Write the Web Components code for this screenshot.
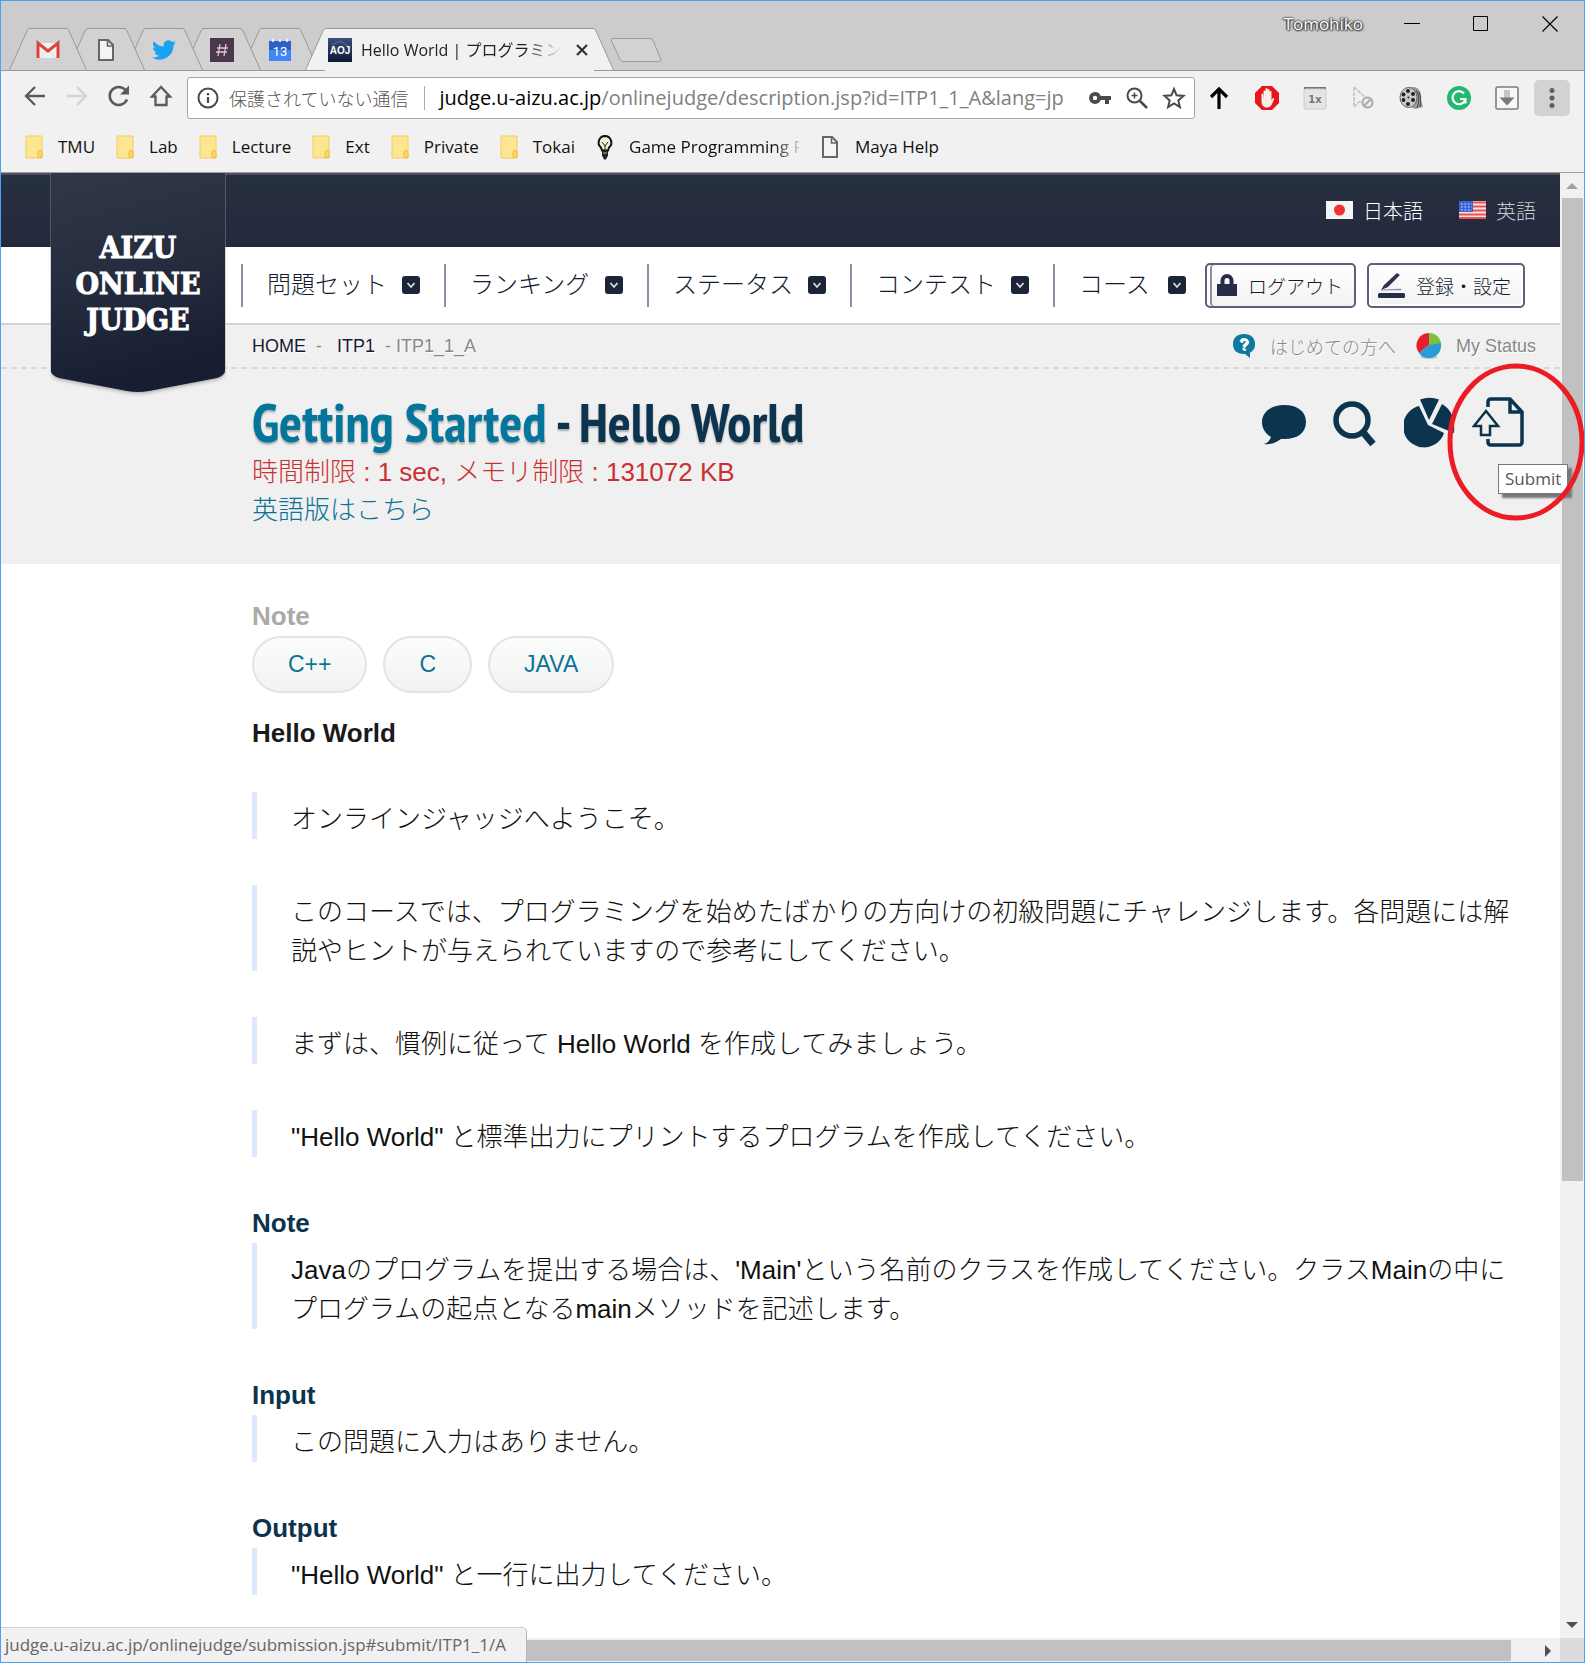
<!DOCTYPE html>
<html lang="ja">
<head>
<meta charset="utf-8">
<title>Hello World | プログラミング</title>
<style>
  html, body { margin: 0; height: 100%; }
  body { font-family: "Liberation Sans", "Noto Sans CJK JP", sans-serif; color: #111; background: #fff; }
</style>
</head>
<body>
<browser-window>
  <tab-strip slot="tabs">
    <browser-tab style="z-index:5"><app-icon name="gmail"></app-icon></browser-tab>
    <browser-tab style="z-index:4"><app-icon name="doc"></app-icon></browser-tab>
    <browser-tab style="z-index:3"><app-icon name="twitter"></app-icon></browser-tab>
    <browser-tab style="z-index:2"><app-icon name="slack"></app-icon></browser-tab>
    <browser-tab style="z-index:1"><app-icon name="calendar"></app-icon></browser-tab>
    <browser-tab active style="z-index:6"><app-icon name="aoj"></app-icon><span slot="title">Hello World | プログラミング</span></browser-tab>
  </tab-strip>
  <tool-bar slot="toolbar"></tool-bar>
  <bookmark-bar slot="bookmarks">
    <bookmark-item icon="folder">TMU</bookmark-item>
    <bookmark-item icon="folder">Lab</bookmark-item>
    <bookmark-item icon="folder">Lecture</bookmark-item>
    <bookmark-item icon="folder">Ext</bookmark-item>
    <bookmark-item icon="folder">Private</bookmark-item>
    <bookmark-item icon="folder">Tokai</bookmark-item>
    <bookmark-item icon="bulb" fade>Game Programming P</bookmark-item>
    <bookmark-item icon="doc">Maya Help</bookmark-item>
  </bookmark-bar>
  <site-header>
    <nav-item>問題セット</nav-item>
    <nav-item>ランキング</nav-item>
    <nav-item>ステータス</nav-item>
    <nav-item>コンテスト</nav-item>
    <nav-item last>コース</nav-item>
  </site-header>
  <problem-head></problem-head>
  <problem-body>
    <section-title muted>Note</section-title>
    <pill-row><pill-link>C++</pill-link><pill-link>C</pill-link><pill-link>JAVA</pill-link></pill-row>
    <section-title lead>Hello World</section-title>
    <quote-block>オンラインジャッジへようこそ。</quote-block>
    <quote-block>このコースでは、プログラミングを始めたばかりの方向けの初級問題にチャレンジします。各問題には解説やヒントが与えられていますので参考にしてください。</quote-block>
    <quote-block>まずは、慣例に従って Hello World を作成してみましょう。</quote-block>
    <quote-block>"Hello World" と標準出力にプリントするプログラムを作成してください。</quote-block>
    <section-title>Note</section-title>
    <quote-block>Javaのプログラムを提出する場合は、'Main'という名前のクラスを作成してください。クラスMainの中にプログラムの起点となるmainメソッドを記述します。</quote-block>
    <section-title>Input</section-title>
    <quote-block>この問題に入力はありません。</quote-block>
    <section-title>Output</section-title>
    <quote-block>"Hello World" と一行に出力してください。</quote-block>
  </problem-body>
</browser-window>

<script>
const define = (name, html, setup) => customElements.define(name, class extends HTMLElement {
  constructor() {
    super();
    this.attachShadow({ mode: 'open' }).innerHTML =
      '<style>*{box-sizing:border-box}a{color:inherit;text-decoration:none}button{font:inherit;border:0;background:none;padding:0;margin:0;color:inherit}</style>' + html;
  }
  connectedCallback() { if (setup) setup(this, this.shadowRoot); }
});

const UI = '"Open Sans","Noto Sans CJK JP",sans-serif';

const ICONS = {
  gmail: [24, 24, '<path d="M2 5h20v15H2z" fill="#f0f0f0"/><path d="M2 20V5l10 8 10-8v15" fill="none" stroke="#d9453a" stroke-width="3"/><path d="M5 20l5-7M19 20l-5-7" stroke="#ddd"/>'],
  doc: [20, 24, '<path d="M3 2h9l5 5v15H3z" fill="#f4f4f4" stroke="#666" stroke-width="2"/><path d="M11.500 2v6H17" fill="none" stroke="#666" stroke-width="1.600"/>'],
  twitter: [24, 24, '<path fill="#1da1f2" d="M24 4.600a10 10 0 0 1-2.800.8 5 5 0 0 0 2.100-2.700 10 10 0 0 1-3.100 1.200 4.900 4.900 0 0 0-8.400 4.500A14 14 0 0 1 1.700 3.200a4.900 4.900 0 0 0 1.500 6.600 5 5 0 0 1-2.200-.6 4.900 4.900 0 0 0 3.900 4.900 5 5 0 0 1-2.200.1 4.900 4.900 0 0 0 4.600 3.400A9.900 9.900 0 0 1 0 19.500a14 14 0 0 0 21.500-12.400A10 10 0 0 0 24 4.600z"/>'],
  slack: [24, 24, '<path fill="#4c364c" d="M0 0h24v24H0z"/><path d="M10 6L8 18M16 6l-2 12M7 10h11M6 14h11" stroke="#d8c8d8" stroke-width="1.300"/>'],
  calendar: [24, 24, '<path fill="#ccc" d="M1 1h22v4H1z"/><path fill="#2f5fc9" d="M1 3h22v10H1z"/><path fill="#4285f4" d="M1 12h22v11H1z"/><path d="M5 1v3M12 1v3M19 1v3" stroke="#fff" stroke-width="1.500"/><text x="12" y="18" font-size="13" text-anchor="middle" fill="#fff" font-family="Roboto,sans-serif">13</text>'],
  aoj: [24, 24, '<defs><linearGradient id="g" x2="0" y2="1"><stop stop-color="#3a4f80"/><stop offset="1" stop-color="#0e1730"/></linearGradient></defs><path fill="url(#g)" d="M0 0h24v24H0z"/><path d="M4 7l8-4 8 5" stroke="#60739c" fill="none"/><text x="12" y="16" font-size="10" font-weight="bold" text-anchor="middle" fill="#fff" font-family="Liberation Sans,sans-serif">AOJ</text>'],
  folder: [18, 24, '<path d="M1 1h16v22H1z" fill="#fde591" stroke="#f2cd5c"/><path d="M13 22.500v-5a2 2 0 0 1 4 0v5z" fill="#fdd860" stroke="#e8bd48"/>'],
  bulb: [18, 26, '<path d="M9 2a6.500 6.500 0 0 0-4 11.500l1 3h6l1-3A6.500 6.500 0 0 0 9 2z" fill="#f1edd8" stroke="#111" stroke-width="2"/><path d="M6 8l3 4 3-4M9 12v4" fill="none" stroke="#222"/><path d="M6 16.500h6v5l-2 4H8l-2-4z" fill="#222"/><path d="M7 19h4" stroke="#aaa"/>'],
  back: [24, 24, '<path d="M22 12H3M12 3l-9 9 9 9" fill="none" stroke="#5a5a5a" stroke-width="2.300"/>'],
  forward: [24, 24, '<path d="M2 12h19M12 3l9 9-9 9" fill="none" stroke="#d3d3d3" stroke-width="2.300"/>'],
  reload: [24, 24, '<path d="M20 15.500A9 9 0 1 1 18.500 6" fill="none" stroke="#5a5a5a" stroke-width="2.600"/><path d="M22 1.500v9h-9z" fill="#5a5a5a"/>'],
  home: [24, 24, '<path d="M12 3L3 12.500h3.500V21h11v-8.500H21z" fill="none" stroke="#5a5a5a" stroke-width="2.300"/>'],
  info: [24, 24, '<circle cx="12" cy="12" r="9.500" fill="none" stroke="#4a4a4a" stroke-width="2"/><path d="M12 11v6M12 7v2.200" stroke="#4a4a4a" stroke-width="2.200"/>'],
  key: [24, 24, '<path d="M7 6a6 6 0 1 0 5.700 8H17v4h4v-4h2v-4H12.700A6 6 0 0 0 7 6zm0 8.200a2.200 2.200 0 1 1 0-4.400 2.200 2.200 0 0 1 0 4.400z" fill="#4a4a4a"/>'],
  zoom: [24, 24, '<circle cx="9.500" cy="9.500" r="7" fill="none" stroke="#4a4a4a" stroke-width="2"/><path d="M15 15l7 7" stroke="#4a4a4a" stroke-width="2.600"/><path d="M6.500 9.500h6M9.500 6.500v6" stroke="#4a4a4a" stroke-width="1.500"/>'],
  star: [24, 24, '<path d="M12 3l2.600 6.300 6.900.6-5.200 4.500 1.600 6.700-5.900-3.600-5.900 3.600 1.600-6.700-5.200-4.500 6.900-.6z" fill="none" stroke="#4a4a4a" stroke-width="2"/>'],
  up: [24, 24, '<path d="M12 23V3M4 11l8-8 8 8" fill="none" stroke="#000" stroke-width="3.200"/>'],
  hand: [24, 24, '<path d="M7 0h10l7 7v10l-7 7H7l-7-7V7z" fill="#e8161b"/><path d="M6.500 8v8c0 3 2 5.500 5.500 5.500 3 0 4.500-2 5.200-4l2-4.500c.3-1-.9-1.500-1.500-.6L16.500 14V6a1 1 0 0 0-2 0v5-7a1 1 0 0 0-2 0v7-8a1 1 0 0 0-2 0v8-5.500a1 1 0 0 0-2 0V13L8 8a.8.8 0 0 0-1.500 0z" fill="#f6f0ea"/>'],
  onex: [24, 24, '<path d="M1 1h22v3H1z" fill="#777"/><rect x="1" y="3" width="22" height="20" rx="1.500" fill="#e4e4e4" stroke="#ccc"/><text x="12" y="17" font-size="10" font-weight="bold" text-anchor="middle" fill="#777" font-family="DejaVu Sans,sans-serif">1x</text>'],
  cursor: [24, 24, '<path d="M3 1v20l5-5h5M3 1l13 12" fill="none" stroke="#c4c4c4" stroke-width="1.600" stroke-dasharray="4 1"/><circle cx="16.500" cy="16.500" r="5" fill="#eee" stroke="#aaa" stroke-width="2"/><path d="M13.500 19.500l6-6" stroke="#aaa" stroke-width="2"/>'],
  reel: [24, 24, '<path d="M9 1h6c6 1 8 7 7 13l2 7-8 2-9-4z" fill="#999"/><path d="M17 4c4 5 3 13 1 18M20 6c2 5 2 10 1 15" stroke="#444" fill="none"/><ellipse cx="9.500" cy="11.500" rx="8.500" ry="10" fill="#c9c9c9" stroke="#666"/><g fill="#222"><circle cx="9" cy="5" r="2"/><circle cx="14" cy="8" r="2"/><circle cx="14" cy="14" r="2"/><circle cx="9" cy="18" r="2"/><circle cx="4.500" cy="14" r="1.900"/><circle cx="4.500" cy="8.500" r="1.900"/><circle cx="9.400" cy="11.500" r="1"/></g>'],
  grammarly: [24, 24, '<circle cx="12" cy="12" r="12" fill="#25b66f"/><path d="M17 7.500a6.500 6.500 0 1 0 1.300 6" fill="none" stroke="#fff" stroke-width="2.200"/><path d="M13 13h5.500v4.500" fill="none" stroke="#fff" stroke-width="2.200"/>'],
  download: [24, 24, '<rect x="1" y="1" width="22" height="22" rx="1.500" fill="#f7f7f7" stroke="#7d7d7d" stroke-width="1.600"/><path d="M9 4h6v8H9z" fill="#c4c4c4"/><path d="M4.500 11.500h15L12 19.500z" fill="#7a7a7a"/>'],
  dots: [24, 24, '<g fill="#5f5f5f"><circle cx="12" cy="4.500" r="2.500"/><circle cx="12" cy="12" r="2.500"/><circle cx="12" cy="19.500" r="2.500"/></g>'],
  jp: [27, 18, '<path d="M0 0h27v18H0z" fill="#f4f4f4"/><circle cx="13.500" cy="9" r="5.500" fill="#f23030"/>'],
  us: [27, 18, '<path d="M0 0h27v18H0z" fill="#f5e4e4"/><path d="M0 1.500h27M0 5.500h27M0 9.500h27M0 13.500h27M0 17h27" stroke="#e8534f" stroke-width="2"/><path d="M0 0h14v11H0z" fill="#3c62d8"/><path d="M2 3h11M2 6h11M2 9h11" stroke="#e5ecff" stroke-width="1.200" stroke-dasharray="1.500 2"/>'],
  caret: [18, 18, '<rect width="18" height="18" rx="3" fill="#1c2438"/><path d="M5.500 7l3.500 4 3.500-4" fill="none" stroke="#ddd" stroke-width="1.800"/>'],
  lock: [20, 22, '<path d="M0 10h20v12H0z" fill="#242c48"/><path d="M5.500 11V6.500a4.500 4.500 0 0 1 9 0V11" fill="none" stroke="#242c48" stroke-width="4"/>'],
  pen: [27, 26, '<rect y="21" width="27" height="5" rx="1.500" fill="#242c48"/><path d="M3 18l3-5L19 1l3 2L10 15z" fill="#2c3450"/><path d="M3 18l20-1v1z" fill="#7c8294" stroke="#7c8294" stroke-width=".5"/>'],
  help: [24, 24, '<path d="M12 0c7 0 11 4 11 10 0 5-2 7-5 8.500V24l-5-4C5 20.500 1 16 1 10S5 0 12 0z" fill="#0c7a9e"/><text x="12" y="16" font-size="16" font-weight="bold" text-anchor="middle" fill="#fff" font-family="Liberation Sans,sans-serif">?</text>'],
  status: [26, 26, '<ellipse cx="13" cy="24" rx="9" ry="2" fill="#ccc"/><path d="M13 12V0A12.500 12.500 0 0 0 3 20z" fill="#e5202c"/><path d="M13 12V0c8 0 12 6 12 12l-1 3z" fill="#7cc242"/><path d="M13 12l12-2c1 8-4 15-12 15-5 0-8-2-10-5z" fill="#2a9bd6"/>'],
  bubble: [46, 50, '<path transform="translate(-1 7)" d="M23 1C10 1 1 8 1 18c0 7 4 12 9 15-1 3-3 6-7 7 7 1 13-2 17-5 16 1 25-6 25-17S36 1 23 1z" fill="#0c344f"/>'],
  search: [46, 50, '<g transform="translate(0 4)"><circle cx="19" cy="19" r="16" fill="none" stroke="#0c344f" stroke-width="5.500"/><path d="M29 30l11 13" stroke="#0c344f" stroke-width="7"/></g>'],
  pie: [52, 52, '<path d="M24 29L15 10a21 21 0 1 0 25 27z" fill="#0c344f"/><path d="M25 24L16 3.500q9.500-3.500 19 0z" fill="#0c344f"/><path d="M28 28l10-20q14 8 12 29z" fill="#0c344f"/>'],
  submit: [52, 50, '<path d="M16 10V5q0-3 3-3h19l12 13v30q0 3-3 3H19q-3 0-3-3v-3M38 2v13h12" fill="none" stroke="#0c344f" stroke-width="3.500"/><path d="M14 14L2 29h7v9h9v-9h8z" fill="#f0f0f0" stroke="#0c344f" stroke-width="2.500"/>'],
  min: [16, 16, '<path d="M0 7.500h16" stroke="#000"/>'],
  max: [16, 16, '<path d="M.5.5h14v14H.5z" fill="none" stroke="#000"/>'],
  close: [16, 16, '<path d="M.5.5l15 15M15.500.5l-15 15" stroke="#000" stroke-width="1.200"/>'],
  tabclose: [12, 12, '<path d="M1 1l10 10M11 1L1 11" stroke="#333" stroke-width="2.200"/>']
};

define('app-icon', '<style>:host{display:inline-flex;flex:none}svg{display:block}</style><span id="s"></span>', (el, root) => {
  const icon = ICONS[el.getAttribute('name')];
  if (!icon) return;
  const [w, h, body] = icon;
  root.getElementById('s').innerHTML = `<svg width="${w}" height="${h}" viewBox="0 0 ${w} ${h}" aria-hidden="true">${body}</svg>`;
});

define('browser-tab', `<style>
  :host{display:flex;position:relative;height:42px;margin-left:-20px;--fill:#d2d2d2}
  :host(:first-child){margin-left:0}
  :host([active]){--fill:#f1f1f1;margin-left:-14px;height:43px}
  svg{flex:none;display:block;fill:var(--fill);stroke:#999}
  .mid{display:flex;align-items:center;justify-content:center;gap:9px;width:38px;background:var(--fill);border-top:1px solid #999}
  :host([active]) .mid{width:269px;justify-content:flex-start;padding-left:3px}
  .title{display:none;flex:none;width:201px;overflow:hidden;white-space:nowrap;font-size:16px;line-height:26px;
    mask-image:linear-gradient(90deg,#000 165px,transparent 200px)}
  :host([active]) .title{display:block}
  button{display:none}
  :host([active]) button{display:block;margin-left:5px}
</style>
<svg width="20" height="42"><path d="M0 43L18 3Q19 .5 20.500 .5V43z" stroke="none"/><path d="M.5 42L18 3Q19 .5 20.500 .5" fill="none"/></svg>
<div class="mid"><slot></slot><div class="title"><slot name="title"></slot></div><button aria-label="Close tab"><app-icon name="tabclose"></app-icon></button></div>
<svg width="20" height="42"><path d="M20 43L2 3Q1 .5-.5 .5V43z" stroke="none"/><path d="M19.500 42L2 3Q1 .5-.5 .5" fill="none"/></svg>`);

define('tab-strip', `<style>
  :host{display:flex;justify-content:space-between;height:70px;background:#ccc;box-shadow:inset 0 -1px #999;font-family:${UI};color:#222}
  .tabs{display:flex;align-items:flex-start;padding:27px 0 0 8px}
  .new{display:block;margin:9px 0 0 -4px}
  .ctl{display:flex;gap:53px;padding:14px 26px 0 0;align-items:flex-start}
  .user{font-size:17px;line-height:18px;color:#fff;text-shadow:0 0 2px #333,0 0 2px #333,1px 1px 2px #444,-1px 0 1px #555;margin-right:-12px}
</style>
<div class="tabs"><slot></slot><button class="new" aria-label="New tab"><svg width="52" height="26" style="display:block"><path d="M3 1.500h37q2 0 3 2l7.500 18q1 3-2 3H13q-2 0-3-2L1.500 4q-1-2.500 1.500-2.500z" fill="#d2d2d2" stroke="#999"/></svg></button></div>
<div class="ctl"><span class="user">Tomohiko</span><button aria-label="Minimize"><app-icon name="min"></app-icon></button><button aria-label="Maximize"><app-icon name="max"></app-icon></button><button aria-label="Close"><app-icon name="close"></app-icon></button></div>`);

define('tool-bar', `<style>
  :host{display:flex;align-items:center;padding:6px 14px 3px 22px;background:#f1f1f1;font-family:${UI}}
  .nav{display:flex;gap:18px;margin-right:14px}
  button{display:block}
  .box{flex:1;display:flex;align-items:center;height:42px;background:#fff;border:1px solid #a6a6a6;border-radius:3px;padding:0 8px;min-width:0}
  .safe{font-size:18px;color:#555;margin-left:9px;white-space:nowrap;font-weight:300}
  .bar{width:1px;height:24px;background:#aaa;margin:0 14px 0 16px}
  label,input{font-size:20px;line-height:30px;color:#000}
  input{flex:1;min-width:0;border:0;padding:0;margin:0;background:none;color:#808080;font-family:inherit;outline:0}
  .in{display:flex;gap:13px}
  .ext{display:flex;align-items:center;gap:24px;margin-left:12px}
  .menu{width:36px;height:36px;border-radius:5px;background:#d2d2d2;display:grid;place-items:center;margin-left:-9px}
</style>
<div class="nav"><button aria-label="Back"><app-icon name="back"></app-icon></button><button aria-label="Forward"><app-icon name="forward"></app-icon></button><button aria-label="Reload"><app-icon name="reload"></app-icon></button><button aria-label="Home"><app-icon name="home"></app-icon></button></div>
<div class="box"><app-icon name="info"></app-icon><span class="safe">保護されていない通信</span><span class="bar"></span>
<label for="url">judge.u-aizu.ac.jp</label><input id="url" type="text" value="/onlinejudge/description.jsp?id=ITP1_1_A&amp;lang=jp">
<div class="in"><app-icon name="key"></app-icon><app-icon name="zoom"></app-icon><app-icon name="star"></app-icon></div></div>
<div class="ext"><app-icon name="up"></app-icon><app-icon name="hand"></app-icon><app-icon name="onex"></app-icon><app-icon name="cursor"></app-icon><app-icon name="reel"></app-icon><app-icon name="grammarly"></app-icon><app-icon name="download"></app-icon><button class="menu" aria-label="Menu"><app-icon name="dots"></app-icon></button></div>`);

define('bookmark-item', `<style>
  :host{display:block}
  a{display:flex;align-items:center;gap:15px}
  .label{white-space:nowrap}
  :host([fade]) .label{width:170px;overflow:hidden;mask-image:linear-gradient(90deg,#000 145px,transparent 175px)}
</style><a href="#"><span class="label"><slot></slot></span></a>`, (el, root) => {
  const icon = document.createElement('app-icon');
  icon.setAttribute('name', el.getAttribute('icon'));
  root.querySelector('a').prepend(icon);
});

define('bookmark-bar', `<style>
  :host{display:flex;align-items:center;gap:21px;height:50px;padding:0 24px;background:#f1f1f1;border-bottom:1px solid #a0a0a0;font:17px/24px ${UI};color:#111}
</style><slot></slot>`);

define('browser-window', `<style>
  :host{display:flex;flex-direction:column;position:relative;min-height:100vh;box-sizing:border-box;border:1px solid #4f9ff5;overflow:hidden}
  .view{flex:1;display:grid;grid-template-columns:minmax(0,1fr) 24px;grid-template-rows:1fr 24px}
  .page{min-width:0;background:#fff}
  .v,.h{background:#f1f1f1;display:flex;align-items:center}
  .v{flex-direction:column;padding:10px 2px 10px}
  .h{padding:2px 9px 1px 0}
  .v i{width:21px;flex:0 0 68%;background:#c1c1c1;margin-top:9px}
  .h i{height:21px;flex:1;margin-right:34px;background:#c1c1c1}
  .sp{flex:1}
  .corner{background:#dcdcdc}
  .link{position:absolute;left:-1px;bottom:0;padding:0 20px 0 5px;font:17px/34px ${UI};color:#666;background:#f1f1f1;border-top:1px solid #d0d0d0;border-right:1px solid #b5b5b5;border-radius:0 5px 0 0}
</style>
<slot name="tabs"></slot><slot name="toolbar"></slot><slot name="bookmarks"></slot>
<div class="view"><main class="page"><slot></slot></main>
<div class="v"><svg width="12" height="6"><path d="M6 0l6 6H0z" fill="#a3a3a3"/></svg><i></i><span class="sp"></span><svg width="12" height="6"><path d="M0 0h12L6 6z" fill="#505050"/></svg></div>
<div class="h"><i></i><svg width="6" height="12"><path d="M0 0l6 6-6 6z" fill="#505050"/></svg></div><div class="corner"></div></div>
<div class="link">judge.u-aizu.ac.jp/onlinejudge/submission.jsp#submit/ITP1_1/A</div>`);

define('nav-item', `<style>
  :host{display:block;box-sizing:border-box;flex:0 0 203px;border-left:2px solid #8d90a0}
  :host([last]){flex-basis:152px}
  a{display:flex;align-items:center;justify-content:space-between;height:43px;padding:0 24px;color:#151b30;font-size:24px;line-height:36px;font-weight:300;white-space:nowrap}
  :host([last]) a{padding-right:19px}
</style><a href="#"><slot></slot><app-icon name="caret"></app-icon></a>`);

define('site-header', `<style>
  :host{display:block;position:relative}
  .top{display:flex;justify-content:flex-end;align-items:center;gap:36px;height:74px;padding:0 24px 2px;background:linear-gradient(#273040,#242b3f 70%,#222a3a);border-top:2px solid #4a5060;color:#fff;font-size:20px;font-weight:300}
  .top a{display:flex;align-items:center;gap:10px}
  .top a+a{color:#c8c8c8}
  nav{display:flex;align-items:center;height:76px;padding:0 35px 0 240px;background:#fff}
  .btn{flex:none;display:flex;align-items:center;justify-content:space-between;height:45px;border:2px solid #5d6078;border-radius:5px;background:linear-gradient(#fff,#f2f2f2);color:#151b30;font-size:19px;font-weight:300;padding:0 11px 0 10px;white-space:nowrap;box-shadow:inset 0 0 0 2px #fff}
  .out{width:151px;margin-right:11px;box-shadow:inset 3px 0 #fff,inset 5px 0 #8d90a0}
  .set{width:158px;padding:0 12px 0 9px}
  .logo{position:absolute;left:49px;top:0;width:176px;height:224px;display:flex}
  .logo svg{position:absolute;inset:0}
  .logo span{position:relative;width:100%;padding-top:57px;text-align:center;color:#fff;font:bold 30px/36px "DejaVu Serif Condensed","DejaVu Serif",serif;-webkit-text-stroke:1px #fff}
</style>
<div class="top"><a href="#"><app-icon name="jp"></app-icon>日本語</a><a href="#"><app-icon name="us"></app-icon>英語</a></div>
<nav><slot></slot><button class="btn out"><app-icon name="lock"></app-icon>ログアウト</button><button class="btn set"><app-icon name="pen"></app-icon>登録・設定</button></nav>
<a class="logo" href="#"><svg width="176" height="224"><defs><linearGradient id="lg" x2="0.200" y2="1"><stop stop-color="#303748"/><stop offset=".5" stop-color="#252d3e"/><stop offset="1" stop-color="#171e33"/></linearGradient></defs><path d="M1 0h174v198q0 4-8 7l-68 13q-11 2-22 0L9 205q-8-3-8-7z" fill="url(#lg)" style="filter:drop-shadow(0 1px 2px #999)"/></svg><span>AIZU<br>ONLINE<br>JUDGE</span></a>`);

define('problem-head', `<style>
  :host{display:block;background:#f0f0f0;border-top:2px solid #d3d3d3}
  .crumb{display:flex;justify-content:space-between;align-items:center;height:44px;padding:0 24px 0 251px;border-bottom:2px dashed #d8d8d8;font-size:18px;color:#888;text-shadow:1px 1px #fff}
  .crumb div{display:flex;align-items:center;white-space:pre}
  .crumb div a{color:#151b30}
  .crumb .r a{display:flex;align-items:center;gap:14px;color:#888;font-weight:300}
  .r{gap:20px}
  .row{display:flex;justify-content:space-between;padding:25px 36px 35px 251px}
  h1{margin:0 0 3px;font:bold 54px/56px "PT Sans Narrow",Lato,sans-serif;color:#0c344f;text-shadow:0 2px 2px #aaa;white-space:nowrap}
  h1 span{color:#04769c}
  p{margin:0;font-size:26px;line-height:38px;font-weight:300;color:#c83232}
  p+p{color:#0b7396}
  .icons{display:flex;align-items:center;gap:25px;height:56px}
  .icons a{display:flex}
  .sub{position:relative;margin-left:-9px}
  .tip{position:absolute;left:26px;top:67px;background:#fff;border:1px solid #767676;box-shadow:4px 4px 2px #777;padding:0 6px;color:#575757;font:17px/28px ${UI}}
  .ring{position:absolute;left:-26px;top:-35px;pointer-events:none}
</style>
<div class="crumb"><div><a href="#">HOME</a>  -   <a href="#">ITP1</a>  - ITP1_1_A</div><div class="r"><a href="#"><app-icon name="help"></app-icon>はじめての方へ</a><a href="#"><app-icon name="status"></app-icon>My Status</a></div></div>
<div class="row"><div><h1><span>Getting Started</span> - Hello World</h1><p>時間制限 : 1 sec, メモリ制限 : 131072 KB</p><p><a href="#">英語版はこちら</a></p></div>
<div class="icons"><a href="#" aria-label="Comments"><app-icon name="bubble"></app-icon></a><a href="#" aria-label="Search"><app-icon name="search"></app-icon></a><a href="#" aria-label="Statistics"><app-icon name="pie"></app-icon></a>
<div class="sub"><a href="#" aria-label="Submit"><app-icon name="submit"></app-icon></a><div class="tip" role="tooltip">Submit</div><svg class="ring" width="140" height="160"><ellipse cx="70" cy="80" rx="66" ry="76" fill="none" stroke="#ed1c24" stroke-width="5"/></svg></div></div></div>`);

define('problem-body', `<style>:host{display:block;padding:33px 30px 40px 251px;font-size:26px;line-height:39px}</style><slot></slot>`);
define('section-title', `<style>
  :host{display:block;margin-top:47px}
  h2{margin:0;font:bold 26px/39px "Liberation Sans",sans-serif;color:#0c344f}
  :host([muted]){margin-top:0} :host([muted]) h2{color:#aaa}
  :host([lead]){margin:21px 0 39px} :host([lead]) h2{color:#1a1a1a}
</style><h2><slot></slot></h2>`);
define('pill-row', '<style>:host{display:flex;gap:16px}</style><slot></slot>');
define('pill-link', `<style>a{display:block;border:2px solid #e3e4e4;border-radius:29px;padding:0 34px;font-size:23px;line-height:53px;color:#0b7396;background:linear-gradient(#fbfcfc,#f1f3f3)}</style><a href="#"><slot></slot></a>`);
define('quote-block', `<style>
  :host{display:block}
  blockquote{margin:0;border-left:5px solid #dde8ff;padding:8px 0 0 34px;font-weight:300}
</style><blockquote><slot></slot></blockquote>`, el => {
  if (el.previousElementSibling && el.previousElementSibling.localName === 'quote-block') el.style.marginTop = '46px';
});
</script>
</body>
</html>
